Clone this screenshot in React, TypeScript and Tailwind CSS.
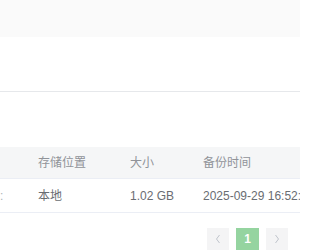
import React from "react";

const font = { fontFamily: '"Liberation Sans", "Noto Sans CJK SC", sans-serif' };

export default function App() {
  return (
    <div className="w-[300px] h-[250px] overflow-hidden bg-white text-[12px]" style={font}>
      <div className="h-[37px] bg-[#fafafa]" />
      <div className="h-[55px] border-b border-[#e6e8eb]" />
      <div className="h-[55px]" />

      <div className="grid grid-cols-[26px_92px_73px_1fr] h-[32px] items-center bg-[#f5f6f7] border-b border-[#ebeef5] text-[#909399]">
        <div />
        <div className="pl-[12px] whitespace-nowrap">存储位置</div>
        <div className="pl-[12px] whitespace-nowrap">大小</div>
        <div className="pl-[12px] whitespace-nowrap">备份时间</div>
      </div>
      <div className="grid grid-cols-[26px_92px_73px_1fr] h-[34px] items-center border-b border-[#ebeef5] text-[#6a6d72]">
        <div className="overflow-hidden whitespace-nowrap text-[#b0b3b8]">:</div>
        <div className="pl-[12px] whitespace-nowrap">本地</div>
        <div className="pl-[12px] whitespace-nowrap">1.02 GB</div>
        <div className="pl-[12px] whitespace-nowrap overflow-hidden">2025-09-29 16:52:38</div>
      </div>

      <div className="flex justify-end pr-[12px] pt-[15px] gap-[7px]">
        <div className="w-[22px] h-[22px] bg-[#f4f4f5] flex items-center justify-center text-[#c0c4cc]">
          <svg width="8" height="10" viewBox="0 0 8 10" fill="none" stroke="currentColor" strokeWidth="1">
            <path d="M5.5 1 L2.5 5 L5.5 9" />
          </svg>
        </div>
        <div className="w-[23px] h-[22px] bg-[#95d4a0] flex items-center justify-center text-white font-bold">1</div>
        <div className="w-[22px] h-[22px] bg-[#f4f4f5] flex items-center justify-center text-[#c0c4cc]">
          <svg width="8" height="10" viewBox="0 0 8 10" fill="none" stroke="currentColor" strokeWidth="1">
            <path d="M2.5 1 L5.5 5 L2.5 9" />
          </svg>
        </div>
      </div>
    </div>
  );
}
